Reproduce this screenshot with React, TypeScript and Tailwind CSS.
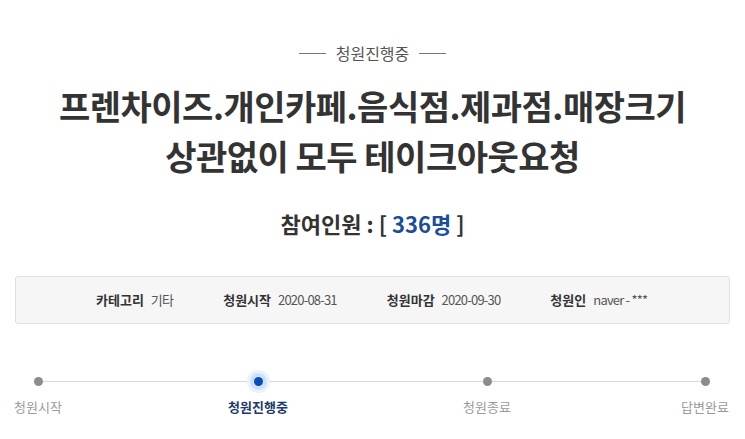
const font = { fontFamily: '"Noto Sans CJK KR", "Noto Sans", sans-serif' };

const infos = [
  { label: "카테고리", value: "기타" },
  { label: "청원시작", value: "2020-08-31" },
  { label: "청원마감", value: "2020-09-30" },
  { label: "청원인", value: "naver - ***" },
];

function Step({ label, active }: { label: string; active?: boolean }) {
  return (
    <div className="w-[70px] flex flex-col items-center">
      {active ? (
        <span className="relative z-10 w-[9px] h-[9px] rounded-full bg-[#0b4db5] ring-[4px] ring-[#cfe1fa] shadow-[0_0_0_7px_#eaf2fd]" />
      ) : (
        <span className="relative z-10 w-[9px] h-[9px] rounded-full bg-[#8c8c8c]" />
      )}
      <span
        className={
          active
            ? "mt-[11px] text-[13px] font-bold text-[#1d3a6d]"
            : "mt-[11px] text-[13px] text-[#9a9a9a]"
        }
      >
        {label}
      </span>
    </div>
  );
}

export default function App() {
  return (
    <div className="w-[745px] h-[439px] overflow-hidden bg-white" style={font}>
      <div className="pt-[41px] flex items-center justify-center gap-[10px]">
        <span className="block w-[27px] h-px bg-[#777]" />
        <span className="text-[16px] leading-[24px] text-[#555]">청원진행중</span>
        <span className="block w-[27px] h-px bg-[#777]" />
      </div>

      <h1 className="mt-[16px] text-center text-[34px] leading-[50px] font-bold text-[#333] tracking-[-0.5px]">
        프렌차이즈.개인카페.음식점.제과점.매장크기
        <br />
        상관없이 모두 테이크아웃요청
      </h1>

      <div className="mt-[26px] text-center text-[22px] leading-[32px] font-bold text-[#333]">
        참여인원 : [ <span className="text-[#1c4c9c]">336명</span> ]
      </div>

      <div className="mt-[37px] mx-[15px] h-[48px] rounded-[3px] border border-[#e0e0e0] bg-[#f6f6f6] flex items-center pl-[80px] gap-[50px] text-[13px]">
        {infos.map((i) => (
          <div key={i.label} className="flex items-center gap-[7px]">
            <span className="font-bold text-[#333]">{i.label}</span>
            <span className="text-[#555] tracking-[-0.8px]">{i.value}</span>
          </div>
        ))}
      </div>

      <div className="mt-[53px] relative">
        <div className="absolute left-[38px] right-[40px] top-[4px] h-px bg-[#d7d7d7]" />
        <div className="flex items-start">
          <div className="ml-[3px]">
            <Step label="청원시작" />
          </div>
          <div className="ml-[150px]">
            <Step label="청원진행중" active />
          </div>
          <div className="ml-[159px]">
            <Step label="청원종료" />
          </div>
          <div className="ml-[148px]">
            <Step label="답변완료" />
          </div>
        </div>
      </div>
    </div>
  );
}
